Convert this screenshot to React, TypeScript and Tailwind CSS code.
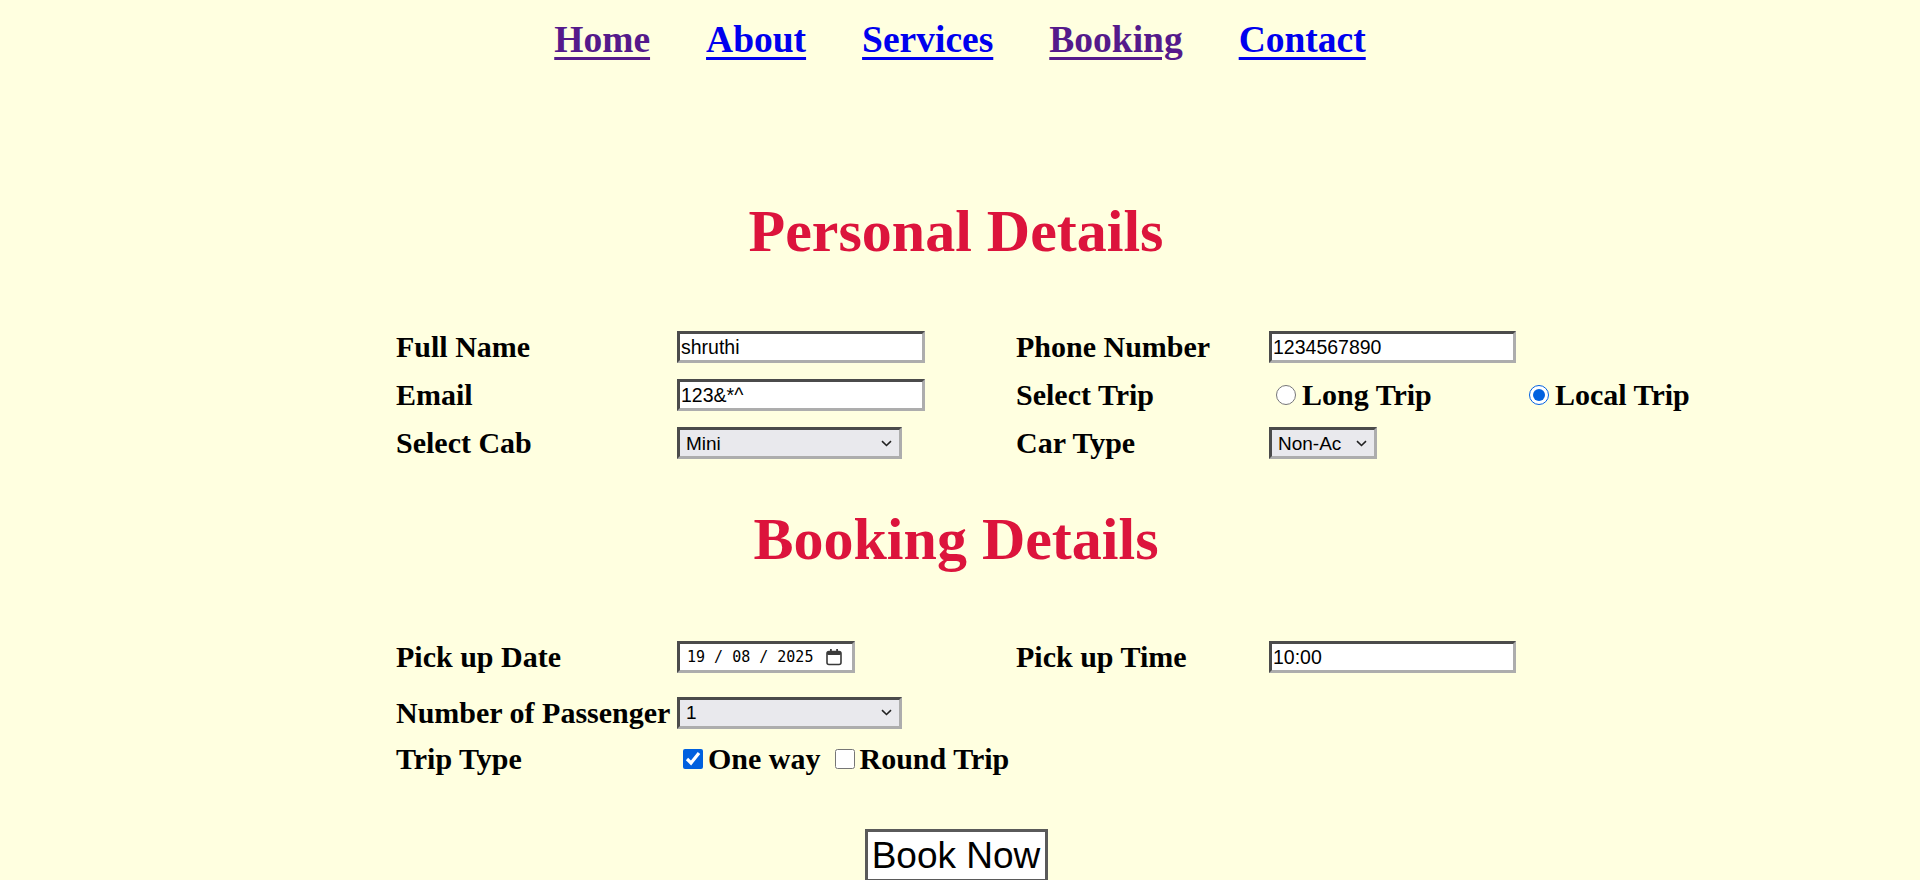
import React from 'react';

const navLinks = [
    { label: 'Home', visited: true },
    { label: 'About', visited: false },
    { label: 'Services', visited: false },
    { label: 'Booking', visited: true },
    { label: 'Contact', visited: false },
];

const fieldBox =
    "h-[32px] border-[3px] border-t-[#4b4b4b] border-l-[#4b4b4b] border-b-[#adadad] border-r-[#adadad] font-['Liberation_Sans',Arial,sans-serif] text-[19.5px] text-black outline-none";

function TextBox({ value, width }: { value: string; width: string }) {
    return <input readOnly value={value} className={`${fieldBox} ${width} bg-white px-[1px]`} />;
}

function SelectBox({ value, width }: { value: string; width: string }) {
    return (
        <div className={`${fieldBox} ${width} bg-[#e9e9ed] flex items-center justify-between pl-[6px] pr-[7px]`}>
            <span className="leading-none text-[19px]">{value}</span>
            <svg width="11" height="7" viewBox="0 0 11 7" fill="none">
                <path d="M1 1.2 L5.5 5.5 L10 1.2" stroke="#222" strokeWidth="1.6" />
            </svg>
        </div>
    );
}

function DateBox() {
    return (
        <div className={`${fieldBox} w-[178px] bg-white flex items-center justify-between pl-[7px] pr-[8px]`}>
            <span className="font-['DejaVu_Sans_Mono',monospace] text-[15px] leading-none whitespace-pre">19 / 08 / 2025</span>
            <svg width="20" height="20" viewBox="0 0 20 20" fill="none">
                <rect x="3" y="4.5" width="14" height="13" rx="2" stroke="#3a3a3a" strokeWidth="1.6" />
                <rect x="3" y="4.5" width="14" height="3.5" rx="1.5" fill="#3a3a3a" />
                <rect x="6" y="2" width="1.8" height="4" fill="#3a3a3a" />
                <rect x="12.2" y="2" width="1.8" height="4" fill="#3a3a3a" />
            </svg>
        </div>
    );
}

function Label({ children }: { children: React.ReactNode }) {
    return <div className="text-[30px] leading-[34px] font-bold text-black whitespace-nowrap">{children}</div>;
}

export default function App() {
    return (
        <div className="min-h-screen bg-[#ffffe0] font-['Liberation_Serif','Times_New_Roman',serif] overflow-hidden">
            {/* nav */}
            <nav className="pt-[18px] flex justify-center gap-[56px] text-[37.5px] leading-[43px] font-bold">
                {navLinks.map((link) => (
                    <a
                        key={link.label}
                        href="#"
                        className={`underline decoration-[3px] underline-offset-[5px] ${
                            link.visited ? 'text-[#551a8b]' : 'text-[#0000ee]'
                        }`}
                    >
                        {link.label}
                    </a>
                ))}
            </nav>

            {/* Personal Details */}
            <h1 className="mt-[136px] pr-2 text-center text-[60px] leading-[69px] font-bold text-[#dc143c]">
                Personal Details
            </h1>

            <div className="mt-[57px] pl-[396px] grid grid-cols-[281px_339px_253px_253px_auto] grid-rows-[48px_48px_48px] items-center">
                <Label>Full Name</Label>
                <div><TextBox value="shruthi" width="w-[248px]" /></div>
                <Label>Phone Number</Label>
                <div><TextBox value="1234567890" width="w-[247px]" /></div>
                <div />

                <Label>Email</Label>
                <div><TextBox value="123&*^" width="w-[248px]" /></div>
                <Label>Select Trip</Label>
                <label className="flex items-center text-[30px] leading-[34px] font-bold">
                    <input type="radio" name="trip" className="ml-[7px] mr-[6px] w-[20px] h-[20px] m-0 accent-[#0060df]" />
                    Long Trip
                </label>
                <label className="flex items-center text-[30px] leading-[34px] font-bold whitespace-nowrap">
                    <input type="radio" name="trip" defaultChecked className="ml-[7px] mr-[6px] w-[20px] h-[20px] m-0 accent-[#0060df]" />
                    Local Trip
                </label>

                <Label>Select Cab</Label>
                <div><SelectBox value="Mini" width="w-[225px]" /></div>
                <Label>Car Type</Label>
                <div><SelectBox value="Non-Ac" width="w-[108px]" /></div>
                <div />
            </div>

            {/* Booking Details */}
            <h1 className="mt-[38px] pr-2 text-center text-[60px] leading-[69px] font-bold text-[#dc143c]">
                Booking Details
            </h1>

            <div className="mt-[57px] pl-[396px] grid grid-cols-[281px_339px_253px_253px_auto] grid-rows-[52px_59px_34px] items-center">
                <Label>Pick up Date</Label>
                <div><DateBox /></div>
                <Label>Pick up Time</Label>
                <div><TextBox value="10:00" width="w-[247px]" /></div>
                <div />

                <Label>Number of Passenger</Label>
                <div><SelectBox value="1" width="w-[225px]" /></div>
                <div />
                <div />
                <div />

                <Label>Trip Type</Label>
                <div className="col-span-2 flex items-center text-[30px] leading-[34px] font-bold whitespace-nowrap">
                    <input type="checkbox" defaultChecked className="ml-[6px] mr-[5px] w-[20px] h-[20px] m-0 accent-[#0060df]" />
                    One way
                    <input type="checkbox" className="ml-[14px] mr-[5px] w-[20px] h-[20px] m-0 accent-[#0060df]" />
                    Round Trip
                </div>
            </div>

            <div className="mt-[53px] pr-2 flex justify-center">
                <button className="w-[183px] border-[3px] border-[#5a5a5a] bg-white py-[2px] font-['Liberation_Sans',Arial,sans-serif] text-[37px] leading-[43px] text-black">
                    Book Now
                </button>
            </div>
        </div>
    );
}
